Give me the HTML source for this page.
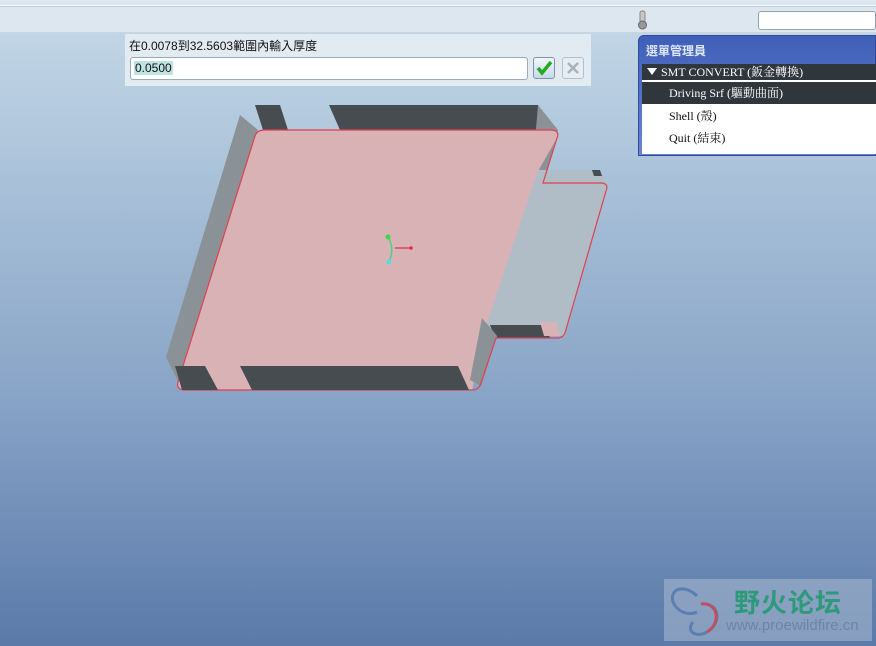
<!DOCTYPE html>
<html><head><meta charset="utf-8"><style>
*{margin:0;padding:0;box-sizing:border-box}
body{width:876px;height:646px;overflow:hidden;position:relative;font-family:"Liberation Sans","Noto Sans CJK TC",sans-serif;
background:linear-gradient(to bottom,#c6d9e8 0px,#b3cade 120px,#9db6d2 260px,#88a3c6 400px,#6f8db7 530px,#5b7aa8 646px)}
.tb{position:absolute;left:0;top:0;width:876px;height:33px;background:#dde7ef;border-bottom:1px solid #c9d6e2}
.tb .l{position:absolute;left:0;top:5px;width:876px;height:1px;background:#f4f8fb}
.tb .l2{position:absolute;left:0;top:6px;width:876px;height:1px;background:#bccbd8}
.inp{position:absolute;left:758px;top:11px;width:118px;height:19px;background:#fff;border:1px solid #8fa3b5;border-radius:3px}
.dlg{position:absolute;left:125px;top:34px;width:466px;height:52px;background:#e3ebf2}
.dlg .t{position:absolute;left:4px;top:3px;font-size:12px;color:#111}
.dlg .f{position:absolute;left:5px;top:23px;width:398px;height:23px;background:#fff;border:1px solid #9aaabb;border-radius:3px}
.dlg .f span{position:absolute;left:3px;top:3px;font-size:12px;background:#bfe3e3;color:#111;padding:0 1px}
.b1{position:absolute;left:408px;top:23px;width:22px;height:22px;border:1px solid #7a94b0;border-radius:3px;background:linear-gradient(#f2f7fb,#c8d8e8)}
.b2{position:absolute;left:437px;top:23px;width:22px;height:22px;border:1px solid #b5c2ce;border-radius:3px;background:#e6edf3}
.mm{position:absolute;left:638px;top:35px;width:238px;height:121px;background:linear-gradient(#3f5fb8,#6a84d0);border-radius:6px 0 0 0;border:1px solid #2f4a98}
.mm .h{position:absolute;left:7px;top:6px;font-size:12px;font-weight:bold;color:#dfe6f7;font-family:"Noto Sans CJK TC",sans-serif}
.mm .body{position:absolute;left:3px;top:28px;width:234px;height:90px;background:#fff}
.it{position:absolute;left:0;width:234px;height:22px;font-family:"Liberation Serif","Noto Serif CJK SC",serif;font-size:12px;line-height:22px;color:#111;padding-left:27px}
.logo{position:absolute;left:664px;top:579px;width:208px;height:62px;background:rgba(170,185,210,.55)}
</style></head><body>
<div class="tb"><div class="l"></div><div class="l2"></div>
<svg style="position:absolute;left:636px;top:10px" width="14" height="22"><rect x="4" y="1" width="5" height="12" rx="2" fill="#c8c8c8" stroke="#888"/><circle cx="6.5" cy="15" r="4" fill="#999" stroke="#666"/></svg>
<div class="inp"></div></div>
<div class="dlg"><div class="t">在0.0078到32.5603範圍內輸入厚度</div>
<div class="f"><span>0.0500</span></div>
<div class="b1"><svg width="20" height="20"><path d="M4 10 L8 15 L17 4" stroke="#22aa22" stroke-width="3.5" fill="none"/></svg></div>
<div class="b2"><svg width="20" height="20"><path d="M5 5 L15 15 M15 5 L5 15" stroke="#a8b2bc" stroke-width="2.5"/></svg></div>
</div>
<svg style="position:absolute;left:0;top:0" width="876" height="646">
<polygon points="240,115 258,130 180,385 166,357" fill="#8b9297"/>
<polygon points="255,105 280,105 288,130 263,130" fill="#474c50"/>
<polygon points="329,105 538,105 546,130 340,130" fill="#474c50"/>
<polygon points="538,105 558,130 545,180 533,165" fill="#8b9297"/>
<polygon points="537,170 600,170 608,185 565,336 488,336 480,320" fill="#b0bcc6"/>
<polygon points="592,170 600,170 602,176 594,176" fill="#474c50"/>
<polygon points="490,325 545,325 550,338 495,338" fill="#474c50"/>
<polygon points="482,318 497,336 481,386 470,380" fill="#8b9297"/>
<path d="M265,130 L552,130 Q560,131 557,138 L537,173 L488,320 L472,390 L184,390 Q176,389 178,382 L255,136 Q257,130 265,130 Z" fill="#d8b2b5"/>
<polygon points="482,318 497,336 481,386 470,380" fill="#8b9297"/>
<polygon points="540,322 556,322 560,336 544,336" fill="#d8b2b5"/>
<path d="M265,130 L552,130 Q560,131 557,138 L543,183 L602,183 Q609,184 606,191 L565,333 Q563,338 557,338 L496,338 L481,383 Q479,390 472,390 L184,390 Q176,389 178,382 L255,136 Q257,130 265,130 Z" fill="none" stroke="#e0404f" stroke-width="1.2"/>
<polygon points="175,366 205,366 218,390 182,390" fill="#474c50"/>
<polygon points="240,366 458,366 469,390 252,390" fill="#474c50"/>
<path d="M388,237 Q395,248 389,262" stroke="#4cd08a" stroke-width="1.5" fill="none"/>
<line x1="395" y1="248" x2="411" y2="248" stroke="#e03040" stroke-width="1.2"/>
<circle cx="388" cy="237" r="2.5" fill="#33dd44"/><circle cx="389" cy="262" r="2.5" fill="#55dddd"/><circle cx="411" cy="248" r="1.8" fill="#e03040"/>
</svg>
<div class="mm"><div class="h">選單管理員</div>
<div class="body">
<div class="it" style="top:0;height:16px;line-height:16px;background:#2f363c;color:#fff;padding-left:19px">SMT CONVERT (鈑金轉換)</div>
<svg style="position:absolute;left:5px;top:4px" width="10" height="8"><polygon points="0,0 10,0 5,7" fill="#fff"/></svg>
<div class="it" style="top:18px;background:#2f363c;color:#fff">Driving Srf (驅動曲面)</div>
<div class="it" style="top:41px">Shell (殼)</div>
<div class="it" style="top:63px">Quit (結束)</div>
</div></div>
<div class="logo">
<svg style="position:absolute;left:3px;top:3px" width="62" height="58"><path d="M30 14 C18 2 2 6 6 20 C10 30 22 34 30 30 M34 22 C52 20 56 40 40 50 C30 56 18 50 26 40" stroke="#5a7fb0" stroke-width="3" fill="none"/><path d="M34 22 C52 20 54 42 40 50" stroke="#c05060" stroke-width="3" fill="none"/></svg>
<div style="position:absolute;left:70px;top:4px;font-family:'Noto Sans CJK SC',sans-serif;font-weight:bold;font-size:26px;color:#2e9a7a;letter-spacing:1px">野火论坛</div>
<div style="position:absolute;left:62px;top:38px;font-size:15px;color:#6d84a8">www.proewildfire.cn</div>
</div>
</body></html>
